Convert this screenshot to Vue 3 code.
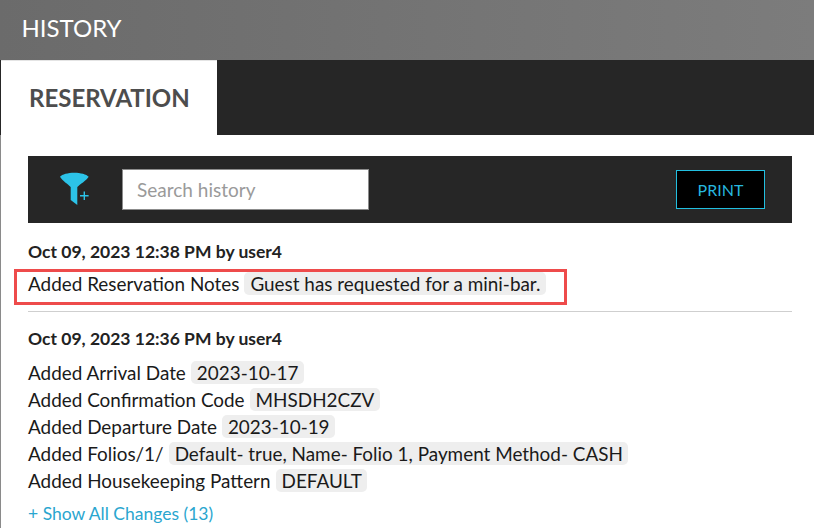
<script setup>
const changes = [
  { label: 'Added Arrival Date', value: '2023-10-17' },
  { label: 'Added Confirmation Code', value: 'MHSDH2CZV' },
  { label: 'Added Departure Date', value: '2023-10-19' },
  { label: 'Added Folios/1/', value: 'Default- true, Name- Folio 1, Payment Method- CASH' },
  { label: 'Added Housekeeping Pattern', value: 'DEFAULT' }
]
</script>

<template>
  <div class="history">
    <header class="top-bar">HISTORY</header>

    <div class="tabs">
      <div class="tab">RESERVATION</div>
    </div>

    <div class="content">
      <div class="toolbar">
        <svg class="filter-icon" width="32" height="36" viewBox="0 0 32 36">
          <path d="M1 4.700 C3 2.300 9 0.700 15.300 0.700 C21.500 0.700 27.500 2.300 29.700 4.700 C27 9 21 12 18.300 15 L18.300 33 L11.700 28 L11.700 15 C9 12 3.500 9 1 4.700 Z" fill="#2cc3e8" />
          <path d="M21 23.700 H29.600 M25.300 19.400 V28" stroke="#2cc3e8" stroke-width="1.400" fill="none" />
        </svg>
        <input class="search" type="text" placeholder="Search history" />
        <button class="print">PRINT</button>
      </div>

      <section class="entry first">
        <div class="entry-title">Oct 09, 2023 12:38 PM by user4</div>
        <div class="change marked">
          <span>Added Reservation Notes</span>
          <span class="val">Guest has requested for a mini-bar.</span>
        </div>
      </section>

      <section class="entry second">
        <div class="entry-title">Oct 09, 2023 12:36 PM by user4</div>
        <div class="list">
          <div v-for="c in changes" :key="c.label" class="change">
            <span>{{ c.label }}</span>
            <span class="val">{{ c.value }}</span>
          </div>
        </div>
        <a class="show-all">+ Show All Changes (13)</a>
      </section>
    </div>
  </div>
</template>

<style>
html, body {
  margin: 0;
  background: #fff;
}
</style>

<style scoped>
.history {
  width: 814px;
  height: 528px;
  overflow: hidden;
  font-family: Lato, "Open Sans", sans-serif;
  color: #1a1a1a;
  background: #fff;
}

.top-bar {
  height: 60px;
  box-sizing: border-box;
  padding-left: 21.500px;
  line-height: 56px;
  font-size: 24px;
  color: #fff;
  background: linear-gradient(to right, #6b6b6b, #7c7c7c);
}

.tabs {
  height: 75px;
  background: #262626;
  display: flex;
}

.tab {
  width: 216px;
  margin-left: 1px;
  box-sizing: border-box;
  padding-left: 28px;
  border-top: 1px solid #e4e4e4;
  line-height: 74px;
  font-size: 24px;
  font-weight: 700;
  color: #4d4d4d;
  background: #fff;
}

.content {
  height: 393px;
  box-sizing: border-box;
  padding: 21px 22px 0 27px;
  border-left: 1px solid #8a8a8a;
}

.toolbar {
  height: 67px;
  background: #262626;
  display: flex;
  align-items: center;
  padding-left: 31px;
  padding-right: 27px;
}

.filter-icon {
  flex: none;
  margin-right: 31px;
  margin-top: 1px;
}

.search {
  width: 247px;
  height: 41px;
  box-sizing: border-box;
  padding: 0 14px;
  border: 1px solid #8c8c8c;
  background: #fff;
  font-family: inherit;
  font-size: 19px;
  outline: none;
}

.search::placeholder {
  color: #9a9a9a;
  opacity: 1;
}

.print {
  margin-left: auto;
  width: 89px;
  height: 39px;
  border: 1px solid #22bfe0;
  background: #000;
  color: #27b6de;
  font-family: inherit;
  font-size: 16px;
  padding: 0;
}

.entry-title {
  font-size: 17.500px;
  font-weight: 700;
  line-height: 24px;
  color: #222;
}

.entry.first {
  padding-top: 17px;
  padding-bottom: 14px;
  border-bottom: 1px solid #cfcfcf;
}

.entry.first .entry-title {
  margin-bottom: 6px;
}

.entry.second {
  padding-top: 15px;
}

.list {
  margin-top: 8px;
}

.change {
  height: 27px;
  line-height: 27px;
  font-size: 18.900px;
  white-space: nowrap;
  display: flex;
  align-items: center;
  gap: 5px;
}

.marked {
  position: relative;
}

.marked::after {
  content: "";
  position: absolute;
  left: -14px;
  top: -1px;
  width: 553px;
  height: 36px;
  box-sizing: border-box;
  border: 3px solid #ee4b4b;
}

.val {
  height: 23px;
  line-height: 23px;
  padding: 0 5.500px 0 6px;
  border-radius: 5px;
  background: #eeeeee;
}

.show-all {
  display: block;
  margin-top: 8px;
  line-height: 24px;
  font-size: 17.500px;
  color: #2aa6cf;
}
</style>
